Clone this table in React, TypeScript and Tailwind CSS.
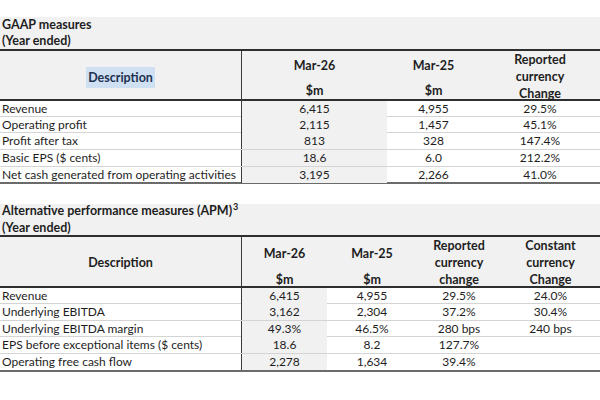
import React from "react";

const topRows = [
  ["Revenue", "6,415", "4,955", "29.5%"],
  ["Operating profit", "2,115", "1,457", "45.1%"],
  ["Profit after tax", "813", "328", "147.4%"],
  ["Basic EPS ($ cents)", "18.6", "6.0", "212.2%"],
  ["Net cash generated from operating activities", "3,195", "2,266", "41.0%"],
];

const botRows = [
  ["Revenue", "6,415", "4,955", "29.5%", "24.0%"],
  ["Underlying EBITDA", "3,162", "2,304", "37.2%", "30.4%"],
  ["Underlying EBITDA margin", "49.3%", "46.5%", "280 bps", "240 bps"],
  ["EPS before exceptional items ($ cents)", "18.6", "8.2", "127.7%", ""],
  ["Operating free cash flow", "2,278", "1,634", "39.4%", ""],
];

const topHeights = ["h-[16px]", "h-[16px]", "h-[17px]", "h-[17px]", "h-[17px]"];
const botHeights = ["h-[16px]", "h-[17px]", "h-[16px]", "h-[17px]", "h-[18px]"];

export default function App() {
  return (
    <div className="w-[600px] h-[400px] bg-white text-[#1e1e1e] font-['Lato',sans-serif] text-[12px] overflow-hidden">
      <div className="h-[17px]" />
      {/* GAAP title */}
      <div className="h-[32px] bg-[#f1f1f1] px-[2px] font-bold text-[12.5px] leading-[16px] flex flex-col justify-center">
        <div>GAAP measures</div>
        <div>(Year ended)</div>
      </div>
      <div className="border-t-2 border-[#2e2e2e]" />
      <div className="grid grid-cols-[242px_145px_93px_1fr] h-[50px] bg-[#f1f1f1] font-bold text-[12.5px] leading-[17px] border-b-2 border-[#2e2e2e]">
        <div className="border-r border-[#3a3a3a] flex items-center justify-center">
          <span className="bg-[#cfe0f3] text-[#1d3150] px-[2px] leading-[21px]">Description</span>
        </div>
        <div className="flex flex-col items-center pt-[6px] gap-[8px]">
          <div>Mar-26</div>
          <div>$m</div>
        </div>
        <div className="flex flex-col items-center pt-[6px] gap-[8px]">
          <div>Mar-25</div>
          <div>$m</div>
        </div>
        <div className="flex flex-col items-center justify-center pb-[2px]">
          <div>Reported</div>
          <div>currency</div>
          <div>Change</div>
        </div>
      </div>
      {topRows.map((r, i) => (
        <div
          key={i}
          className={`grid grid-cols-[242px_145px_93px_1fr] ${topHeights[i]} leading-[16px] ${
            i === topRows.length - 1 ? "border-b-2 border-b-[#6b6b6b]" : "border-b border-b-[#d4d4d4]"
          }`}
        >
          <div className="border-r border-[#3a3a3a] pl-[2px] flex items-center whitespace-nowrap">{r[0]}</div>
          <div className="bg-[#f1f1f1] flex items-center justify-center">{r[1]}</div>
          <div className="flex items-center justify-center">{r[2]}</div>
          <div className="flex items-center justify-center">{r[3]}</div>
        </div>
      ))}
      <div className="h-[20px]" />
      {/* APM title */}
      <div className="h-[31px] bg-[#f1f1f1] px-[2px] font-bold text-[12.5px] leading-[16px] flex flex-col justify-center">
        <div>
          Alternative performance measures (APM)
          <span className="text-[9px] relative top-[-5px] ml-[1px]">3</span>
        </div>
        <div>(Year ended)</div>
      </div>
      <div className="border-t-2 border-[#2e2e2e]" />
      <div className="grid grid-cols-[242px_85px_90px_84px_1fr] h-[51px] bg-[#f1f1f1] font-bold text-[12.5px] leading-[17px] border-b-2 border-[#2e2e2e]">
        <div className="border-r border-[#3a3a3a] flex items-center justify-center">Description</div>
        <div className="flex flex-col items-center pt-[8px] gap-[9px]">
          <div>Mar-26</div>
          <div>$m</div>
        </div>
        <div className="flex flex-col items-center pt-[8px] gap-[9px]">
          <div>Mar-25</div>
          <div>$m</div>
        </div>
        <div className="flex flex-col items-center justify-center">
          <div>Reported</div>
          <div>currency</div>
          <div>change</div>
        </div>
        <div className="flex flex-col items-center justify-center">
          <div>Constant</div>
          <div>currency</div>
          <div>Change</div>
        </div>
      </div>
      {botRows.map((r, i) => (
        <div
          key={i}
          className={`grid grid-cols-[242px_85px_90px_84px_1fr] ${botHeights[i]} leading-[16px] ${
            i === botRows.length - 1 ? "border-b-2 border-b-[#6b6b6b]" : "border-b border-b-[#d4d4d4]"
          }`}
        >
          <div className="border-r border-[#3a3a3a] pl-[2px] flex items-center whitespace-nowrap">{r[0]}</div>
          <div className="bg-[#f1f1f1] flex items-center justify-center">{r[1]}</div>
          <div className="flex items-center justify-center">{r[2]}</div>
          <div className="flex items-center justify-center">{r[3]}</div>
          <div className="flex items-center justify-center">{r[4]}</div>
        </div>
      ))}
    </div>
  );
}
